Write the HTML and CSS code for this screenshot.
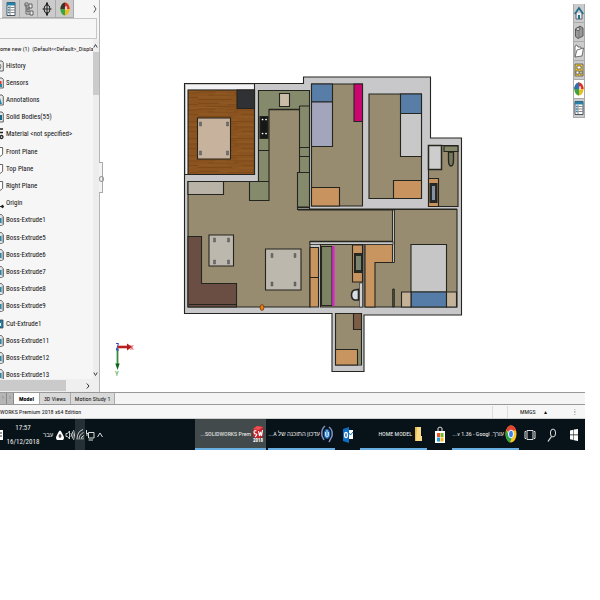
FILE: index.html
```html
<!DOCTYPE html>
<html lang="en">
<head>
<meta charset="utf-8">
<title>SOLIDWORKS Premium 2018</title>
<link rel="stylesheet" href="styles.css">
</head>
<body>
<svg class="defs" aria-hidden="true">
  <defs>
    <symbol id="solid" viewBox="0 0 5 12"><path d="M0 .5h1.5L3.5 3v7.500L1.500 11.500H0" fill="#dfe5e8" stroke="#555" stroke-width=".8"/><path d="M0 4h1.500v5H0z" fill="#2586a8"/><path d="M2.300 3v7" stroke="#777" stroke-width=".6"/></symbol>
    <symbol id="plane" viewBox="0 0 5 12"><path d="M0 1.500h2.600v7L0 10.500" fill="#fff" stroke="#555" stroke-width=".9"/></symbol>
    <symbol id="folder" viewBox="0 0 5 12"><path d="M0 1h2l1.300 1.500v8.500H0" fill="#e8e8e8" stroke="#555" stroke-width=".9"/></symbol>
    <symbol id="ball" viewBox="0 0 10 14"><ellipse cx="5" cy="7" rx="4.600" ry="6.500" fill="#e9bd21"/><path d="M5 7V.5C2.500.5.4 3.500.4 7z" fill="#333"/><path d="M5 7V.5c2.500 0 4.600 3 4.600 6.500z" fill="#de3029"/><path d="M.4 7H5v6.500C2.500 13.500.4 10.500.4 7z" fill="#37a449"/><ellipse cx="6" cy="6" rx="1.200" ry="2" fill="#fff" opacity=".7"/></symbol>
    <symbol id="sheet" viewBox="0 0 10 14"><path d="M1 .5h8v13H1z" fill="#fff" stroke="#345" stroke-width=".9"/><path d="M1 .5h8v3H1z" fill="#2380a6"/><path d="M2 5.500h1.500M2 8h1.500M2 10.500h1.500" stroke="#2380a6" stroke-width="1.400"/><path d="M4.500 5.500h4M4.500 8h4M4.500 10.500h4M4 4v9" stroke="#555" stroke-width=".7"/></symbol>
    <pattern id="wood" width="66" height="17" patternUnits="userSpaceOnUse"><path fill="#8a531f" d="M0 0h66v17H0z"/><path d="M0 1.500h24M30 2.500h36M8 4.500h30M0 7h18M28 8h38M10 10h30M44 12.500h22M0 14.500h34" stroke="#7b4917" stroke-width=".8"/><path d="M20 1h20M0 5.500h20M40 6h26M16 9h20M0 12h30M38 15h20" stroke="#966027" stroke-width=".7"/></pattern>
    <g id="legs"><path d="M0 0h2v4H0z"/></g>
  </defs>
</svg>

<div class="app">
  <div class="workspace">
    <aside class="tree">
      <div class="tree-tabs">
        <button class="tool" aria-label="Properties"><svg viewBox="0 0 10 14"><use href="#sheet"/></svg></button>
        <button class="tool" aria-label="Configurations"><svg viewBox="0 0 10 14" fill="#eee" stroke="#555" stroke-width=".9"><path d="M2 2v10h4M2 6h4M1 1h3v3H1zM5 2h3v4H5zM3 7h2v3H3zM6 9h3v4H6z"/></svg></button>
        <button class="tool" aria-label="Dimensions"><svg viewBox="0 0 10 14" fill="none" stroke="#222"><ellipse cx="5" cy="7" rx="3" ry="4"/><path d="M5 1v12M.5 7h9"/><path d="M4 2.500 5 .5l1 2zM4 11.500l1 2 1-2z" fill="#222"/></svg></button>
        <button class="tool" aria-label="Appearances"><svg viewBox="0 0 10 14"><use href="#ball"/></svg></button>
        <button class="more" aria-label="More tabs"><svg viewBox="0 0 4 8" fill="none" stroke="#555"><path d="M.8.5 3 4 .8 7.500"/></svg></button>
      </div>
      <div class="filter"></div>
      <div class="tree-body">
        <div class="tree-list">
          <div class="root">ome new (1)&nbsp; (Default&lt;&lt;Default&gt;_Displa</div>
          <ul>
            <li><svg viewBox="0 0 5 12"><use href="#folder"/><path d="M0 4q2 2 0 5" fill="none" stroke="#777"/></svg>History</li>
            <li><svg viewBox="0 0 5 12"><use href="#folder"/><path d="M0 4h1.500v3H0z" fill="#d33"/><path d="M0 7h2v3H0z" fill="#2586a8"/></svg>Sensors</li>
            <li><svg viewBox="0 0 5 12"><use href="#folder"/><path d="M0 4l2 6H0z" fill="#2586a8"/></svg>Annotations</li>
            <li><svg viewBox="0 0 5 12"><use href="#folder"/><path d="M0 4h2v5H0z" fill="#17698a"/></svg>Solid Bodies(55)</li>
            <li><svg viewBox="0 0 5 12"><path d="M0 1h3M0 4.500h3" stroke="#222" stroke-width="1.300"/><circle cx="1.500" cy="9" r="1.500" fill="none" stroke="#222" stroke-width="1.300"/></svg>Material &lt;not specified&gt;</li>
            <li><svg viewBox="0 0 5 12"><use href="#plane"/></svg>Front Plane</li>
            <li><svg viewBox="0 0 5 12"><use href="#plane"/></svg>Top Plane</li>
            <li><svg viewBox="0 0 5 12"><use href="#plane"/></svg>Right Plane</li>
            <li><svg viewBox="0 0 5 12"><path d="M0 9.500h2M2 8l2 1.500L2 11z" stroke="#222" fill="#222"/></svg>Origin</li>
            <li><svg viewBox="0 0 5 12"><use href="#solid"/></svg>Boss-Extrude1</li>
            <li><svg viewBox="0 0 5 12"><use href="#solid"/></svg>Boss-Extrude5</li>
            <li><svg viewBox="0 0 5 12"><use href="#solid"/></svg>Boss-Extrude6</li>
            <li><svg viewBox="0 0 5 12"><use href="#solid"/></svg>Boss-Extrude7</li>
            <li><svg viewBox="0 0 5 12"><use href="#solid"/></svg>Boss-Extrude8</li>
            <li><svg viewBox="0 0 5 12"><use href="#solid"/></svg>Boss-Extrude9</li>
            <li><svg viewBox="0 0 5 12"><path d="M0 2h3v8H0z" fill="#2586a8" stroke="#345" stroke-width=".8"/><path d="M0 5h1v3H0z" fill="#dff"/></svg>Cut-Extrude1</li>
            <li><svg viewBox="0 0 5 12"><use href="#solid"/></svg>Boss-Extrude11</li>
            <li><svg viewBox="0 0 5 12"><use href="#solid"/></svg>Boss-Extrude12</li>
            <li><svg viewBox="0 0 5 12"><use href="#solid"/></svg>Boss-Extrude13</li>
          </ul>
        </div>
        <div class="vscroll">
          <svg viewBox="0 0 5 6" fill="none" stroke="#444"><path d="M.8 4.500 2.500 1.500l1.700 3"/></svg>
          <div class="vthumb"></div>
          <svg viewBox="0 0 5 6" fill="none" stroke="#444"><path d="M.8 1.500l1.700 3 1.700-3"/></svg>
        </div>
      </div>
      <div class="hscroll"><div class="hthumb"></div><svg viewBox="0 0 4 8" fill="none" stroke="#333"><path d="M.8 1.500 3 4 .8 6.500"/></svg></div>
      <div class="handle"></div>
    </aside>

    <main class="canvas">
      <svg class="plan" viewBox="100 0 485 392" preserveAspectRatio="xMinYMin meet" role="img" aria-label="Top view of the home model">
        <g stroke="#25251f" stroke-width="1.100">
          <path d="M184.500 83.500H303.500V77H430.500V138H461.500V315H364V371.500H332V313.500H184.500z" fill="#c8c8ca"/>
          <path d="M186 85H254.500V89H188V174H186z" fill="#f2f2f4" stroke="none"/>
          <path d="M188 90H254.500V174.500H188z" fill="url(#wood)"/>
          <path d="M254.500 84V174.500H185" fill="none"/>
          <path d="M237 90H254.500V108.500H237z" fill="#303134"/>
          <path d="M197.500 118H230.500V159H197.500z" fill="#c7b29d"/>
          <!-- living room, kitchen and corridor -->
          <path d="M188 181.500H258.500V90.500H309.500V209.500H393V241.500H310V307H188z" fill="#978b70"/>
          <path d="M258.500 90.500H309.500V207H297.500V172.500H299.500V109.500H269V200.500H249.500V181.500H258.500z" fill="#868a6d"/>
          <path d="M258.500 150.500H269M258.500 181.500H269M299.500 106H309.500M299.500 106V110M299.500 147.500H309.500M299.500 156.500H309.500M297.500 172.500H309.500" fill="none"/>
          <path d="M269 109.500H299.500" stroke-width="1.500"/>
          <path d="M279.500 93.500H289.500V106.500H279.500z" fill="#c9bda8"/>
          <path d="M260 116.500H268V138.500H260z" fill="#171717"/>
          <path d="M188 181.500H223.500V194.500H188z" fill="#b9b2a6"/>
          <path d="M188 236.500H201.500V283.500H236.500V307H188z" fill="#6b4e43"/>
          <path d="M189 304.500H236.500" fill="none"/>
          <path d="M209 235H233.500V266H209zM265.500 249H301V290H265.500z" fill="#bdb8ae"/>
          <path d="M297.500 207.500H309.500V209.500H297.500z" fill="#eef1f1"/>
          <!-- bedrooms and toilet -->
          <path d="M311.500 84H362.500V206H311.500zM369 94H421.500V198.500H369zM428.500 145.500H458V206.500H428.500z" fill="#978b70"/>
          <path d="M311.500 84H332.500V102H311.500zM400.500 94H421.500V113.500H400.500z" fill="#587da7"/>
          <path d="M311.500 102H332.500V146.500H311.500z" fill="#a3a5bc"/>
          <path d="M354 84H362.500V121.500H354z" fill="#cc0670"/>
          <path d="M400.500 113.500H421.500V156.500H400.500z" fill="#c8c8c8"/>
          <path d="M311.500 187.500H339.500V206H311.500zM393.500 180.500H421.500V198.500H393.500z" fill="#c8935e"/>
          <path d="M428.500 145.500H441.500V169.500H428.500z" fill="#cdcdcd" stroke-width="1.500"/>
          <path d="M444 146H458V151.500H444z" fill="#858969"/>
          <path d="M448.500 152h5v8q0 6-2.500 6t-2.500-6z" fill="#777860" stroke-width="1.300"/>
          <path d="M428.500 178.500H438.500V206.500H428.500z" fill="#c8935e"/>
          <path d="M430 183.500H437V202.500H430z" fill="#252a2e"/><path d="M432 186H435V200H432z" fill="#8590a0" stroke="none"/>
          <path d="M298 209.500H457" stroke-width="1.800"/>
          <!-- lower rooms -->
          <path d="M365 244.500H392.500V209.500H457V307H365z" fill="#978b70"/>
          <path d="M365 244.500H392.500V262.500H375V307H365z" fill="#c89560"/>
          <path d="M392.500 210H394.500V262.500H392.500z" fill="#bfc0c0" stroke-width=".9"/><path d="M392.700 289H394.300V307H392.700z" fill="#55564e" stroke-width=".9"/>
          <path d="M411 244.500H446.500V292H411z" fill="#c6c6c6"/>
          <path d="M411 292H446.500V307H411z" fill="#557ca7"/>
          <path d="M401.500 292H411V307H401.500zM446.500 292H456.500V307H446.500z" fill="#c3b298"/>
          <path d="M310 247.500H318.500V307H310zM310 277.500H318.500" fill="#c89560"/>
          <path d="M310 241.500H393V244.500H310z" fill="#c8c8ca" stroke-width=".8"/>
          <path d="M310 241.500H393" stroke-width="1.600"/>
          <path d="M320.500 244.500H363V307H320.500z" fill="#978b70"/>
          <path d="M321.500 246.500H332V305.500H321.500z" fill="#7d8265"/>
          <path d="M333.500 246V306" stroke="#e022d4" stroke-width="2.200"/>
          <path d="M352.500 245H362.500V282H352.500z" fill="#c8935e"/>
          <path d="M354.500 253.500H362V272.500H354.500z" fill="#252a24"/><path d="M356 256H361V270H356z" fill="#7b826d" stroke="none"/>
          <path d="M359.500 283H362.500V307H359.500z" fill="#d0d0d0" stroke-width=".6"/>
          <path d="M358.500 289.500v10.500h-4q-3-1-3-5t3-5z" fill="#d8dce2" stroke-width="1.600"/>
          <path d="M335.500 313.500H361.500V365H335.500z" fill="#978b70"/>
          <path d="M353.500 313.500H361.500V329.500H353.500z" fill="#7d5c45"/>
          <path d="M357.500 349.500H361V364.500H357.500z" fill="#868a6d" stroke="none"/>
          <path d="M335.500 349.500H357.500V365H335.500z" fill="#c89560"/>
        </g>
        <path d="M262.500 119.500h.1M266 119.500h.1M262.500 133.500h.1M266 133.500h.1" stroke="#fff" stroke-width="1.700" stroke-linecap="round"/>
        <g fill="#6c7072" stroke="#444" stroke-width=".4">
          <use href="#legs" x="199.500" y="122"/><use href="#legs" x="226.500" y="122"/><use href="#legs" x="199.500" y="151"/><use href="#legs" x="226.500" y="151"/>
          <use href="#legs" x="213.500" y="238"/><use href="#legs" x="227.500" y="238"/><use href="#legs" x="213.500" y="260"/><use href="#legs" x="227.500" y="260"/>
          <use href="#legs" x="271" y="253.500"/><use href="#legs" x="294" y="253.500"/><use href="#legs" x="271" y="282"/><use href="#legs" x="294" y="282"/>
        </g>
        <ellipse cx="262" cy="307.500" rx="1.900" ry="3" fill="#f07b0b" stroke="#5c3208" stroke-width=".7"/>
        <path d="M117.500 347H128" stroke="#be2020" stroke-width="2.600"/><path d="M127 343.500l5 3.500-5 3.500z" fill="#b51b1b"/>
        <path d="M117.500 348V365" stroke="#3a8a3e" stroke-width="1.800"/><path d="M115.300 363.500h4.400l-2.200 6.500z" fill="#116518"/>
        <path d="M116 343.500h2.500L116.300 350H119" fill="none" stroke="#3b46cf"/>
        <text class="axis axis-x" x="130" y="350">X</text><text class="axis axis-y" x="115" y="376">Y</text>
      </svg>
      <nav class="pane-tools" aria-label="Task pane">
        <button class="tool" aria-label="Resources"><svg viewBox="0 0 10 14"><path d="M2 7v6h6V7" fill="#eee" stroke="#567"/><path d="M.8 8 5 2l4.200 6" fill="none" stroke="#246e8c" stroke-width="1.800"/><path d="M4 9h2v4H4z" fill="#246e8c"/></svg></button>
        <button class="tool" aria-label="Design library"><svg viewBox="0 0 10 14" stroke="#444" stroke-width=".8"><path d="M1.500 4 6 1l3 2v8l-5 2.500-2.500-2z" fill="#999"/><ellipse cx="4" cy="4" rx="2" ry="1.500" fill="#ddd"/><path d="M5 6v7" stroke="#777"/></svg></button>
        <button class="tool" aria-label="File explorer"><svg viewBox="0 0 10 14" stroke="#555" stroke-width=".8" fill="#fff"><path d="M1 13V2l2-1 1 2h3v3"/><path d="M1 13 3 6 9.500 4 8 12z"/></svg></button>
        <button class="tool" aria-label="View palette"><svg viewBox="0 0 10 14"><path d="M1 1h8v12H1z" fill="#edc737" stroke="#555" stroke-width=".8"/><path d="M3 3h4v3H3zM2 8h3v3H2zM6 8h2v3H6z" fill="#fff" stroke="#444" stroke-width=".7"/></svg></button>
        <button class="tool selected" aria-label="Appearances"><svg viewBox="0 0 10 14"><use href="#ball"/><path d="M5 7V.5C2.500.5.4 3.500.4 7z" fill="#2a71bc"/></svg></button>
        <button class="tool" aria-label="Custom properties"><svg viewBox="0 0 10 14"><use href="#sheet"/></svg></button>
      </nav>
    </main>
  </div>

  <div class="tabs">
    <button class="step" aria-label="Next">›</button><button class="step" aria-label="Last">›</button>
    <button class="tab active">Model</button><button class="tab">3D Views</button><button class="tab">Motion Study 1</button>
  </div>

  <footer class="status">
    <span>WORKS Premium 2018 x64 Edition</span>
    <i class="rules"></i>
    <span class="units">MMGS</span><span class="dot">▴</span><span class="end">⁞</span>
  </footer>

  <div class="taskbar">
    <svg class="notice" viewBox="0 0 3 12"><path fill="#fff" d="M0 1h3v10H0z"/><path d="M0 4h2M0 7h2" stroke="#333"/></svg>
    <div class="clock"><span>17:57</span><span>16/12/2018</span></div>
    <span class="lang" lang="he">עבר</span>
    <div class="tray">
      <svg viewBox="0 0 10 12"><path d="M2 11q-2-2 0-5l1.500-3Q5 0 6.500 3L8 6q2 3 0 5z" fill="#fff"/><path d="M5 5v4M3.500 7h3" stroke="#111"/></svg>
      <svg viewBox="0 0 10 12" fill="none" stroke="#ddd" stroke-width=".9"><path d="M1 4.500h1.500L4.500 2v8L2.500 7.500H1zM6 4q1 2 0 4M7.300 2.500q1.700 3.500 0 7M8.600 1q2 5 0 10"/></svg>
      <svg class="lit" viewBox="0 0 10 12" fill="none" stroke="#ccc"><path d="M2 11Q2 3 8 1M4 11q0-5 4.500-7M6 11q0-3 3-4M8 11V9"/></svg>
      <svg viewBox="0 0 10 12" fill="none" stroke="#ddd"><path d="M3.500 3.500H9V9H3.500zM1.500 1v3.500H4M3.500 11H8M2 4v3"/></svg>
      <svg viewBox="0 0 10 12" fill="none" stroke="#ddd"><path d="M2.500 8 5 4l2.500 4"/></svg>
    </div>
    <div class="apps">
      <button class="task current" dir="rtl"><svg viewBox="0 0 12 18"><path d="M1 4 5 1l6 1v9l-4 3-6-2z" fill="#c91d27"/><path d="M1 4 5 1l6 1-4 3z" fill="#ee5051"/><path d="M4.500 6Q2 5 2 7t2 2-1 3M6.500 6l1 5 1-4 1 4 1-6" fill="none" stroke="#fff" stroke-width="1.100"/><text x="11" y="17" class="year">2018</text></svg><span>SOLIDWORKS Prem...</span></button>
      <button class="task" dir="rtl"><svg viewBox="0 0 12 18"><ellipse cx="6" cy="9" rx="3.300" ry="5" fill="#2169b5"/><path d="M4 1Q0 4 1 11l2 4M8 2q4 3 3 9l-3 6" fill="none" stroke="#8394cc" stroke-width="1.500"/><path d="M6 5v7M4.500 7v3q0 2 1.500 2t1.500-2V7" fill="none" stroke="#b8e4ff"/></svg><span lang="he">עדכון התוכנה של A...</span></button>
      <button class="pin" aria-label="Outlook"><svg viewBox="0 0 12 18"><path d="M5 4h6v9H5z" fill="#fff"/><path d="M6 6l2.500 3L11 6" fill="none" stroke="#1473c5"/><path d="M1 3l6-2v16l-6-2z" fill="#0b6fc5"/><ellipse cx="4" cy="9" rx="1.400" ry="2.600" fill="none" stroke="#fff" stroke-width="1.200"/></svg></button>
      <button class="task" dir="rtl"><svg viewBox="0 0 12 18"><path d="M2 2h5v14H2z" fill="#e8b84f"/><path d="M4 2h4v9h1v5H3z" fill="#f9dc87"/></svg><span>HOME MODEL</span></button>
      <button class="pin" aria-label="Store"><svg viewBox="0 0 12 18"><path d="M4 5V2q2-2 4 0v3" fill="none" stroke="#ddd"/><path d="M1 5h10v12H1z" fill="#fff"/><path d="M3 7h3v4H3z" fill="#e9512c"/><path d="M6.500 7h3v4h-3z" fill="#79b51c"/><path d="M3 11.500h3v4H3z" fill="#1ba0df"/><path d="M6.500 11.500h3v4h-3z" fill="#f8b51a"/></svg></button>
      <button class="task" dir="rtl"><svg viewBox="0 0 12 18"><ellipse cx="6" cy="9" rx="5.500" ry="8.500" fill="#fbc91f"/><path d="M6 9 1.200 5Q3 .5 6 .5q4 0 5 5H6z" fill="#e44335"/><path d="M1.200 5Q-1 14 5 17.400L7 12 4 11z" fill="#2ba24c"/><ellipse cx="6" cy="9" rx="2.500" ry="3.900" fill="#3f82ee" stroke="#fff"/></svg><span lang="he">עורך. <bdi>v 1.36 - Googl</bdi>...</span></button>
      <button class="pin system" aria-label="Task view"><svg viewBox="0 0 12 18" fill="none" stroke="#ddd"><path d="M3 4.500h6v9H3zM2 5.500H1v7h1M10 5.500h1v7h-1"/></svg></button>
      <button class="pin system" aria-label="Search"><svg viewBox="0 0 12 18" fill="none" stroke="#ddd"><ellipse cx="7" cy="7" rx="2.600" ry="4"/><path d="M5.500 10.500 2 15.500" stroke-width="1.300"/></svg></button>
      <button class="pin system" aria-label="Start"><svg viewBox="0 0 12 18" fill="#fff"><path d="M2 4.500l3.500-.8v4.800H2zM6 3.600 10 3v5.500H6zM2 9.200h3.500V14L2 13.300zM6 9.200h4V15l-4-.8z"/></svg></button>
    </div>
  </div>
</div>
</body>
</html>
```

FILE: styles.css
```css
* { box-sizing: border-box; }
body {
  margin: 0;
  background: #fff;
  color: #111;
  font-family: "Roboto Condensed", Lato, "Liberation Sans", sans-serif;
  font-size: 7px;
  line-height: 12px;
}
button { margin: 0; padding: 0; border: 0; background: none; color: inherit; font: inherit; }
svg { display: block; flex: none; }
.defs { position: absolute; width: 0; height: 0; }
.app { margin-right: 15px; }

.workspace { display: flex; }
.tree {
  position: relative;
  flex: none;
  display: flex;
  flex-direction: column;
  width: 100px;
  border-right: 1px solid #b5b5b5;
  background: #f6f6f6;
}
.tree-tabs { display: flex; height: 18px; padding-left: 2px; }
.tool {
  display: flex;
  align-items: center;
  justify-content: center;
  width: 18px;
  background: #cbcbcb;
  border-right: 1px solid #aaa;
  border-bottom: 1px solid #aaa;
}
.tool svg { width: 10px; height: 14px; }
.more { margin: 0 2px 0 auto; }
.more svg { width: 4px; height: 8px; }
.filter { height: 21px; margin-right: 2px; border: 1px solid #c6c6c6; border-left: 0; }
.tree-body { display: flex; height: 340px; }
.tree-list { flex: 1; min-width: 0; white-space: nowrap; }
.root { height: 18px; font-size: 6px; line-height: 20px; }
.tree-list ul {
  display: flex;
  flex-direction: column;
  height: 327px;
  margin: 0;
  padding: 0;
  list-style: none;
}
.tree-list li { display: flex; flex: 1; align-items: center; gap: 1px; }
.tree-list li svg { width: 5px; height: 12px; }
.vscroll { display: flex; flex-direction: column; width: 6px; padding: 4px 0 2px; background: #ededed; }
.vscroll svg { width: 5px; height: 6px; }
.vthumb { height: 43px; margin: 3px 0 auto; background: #cbcbcb; }
.hscroll { display: flex; align-items: center; height: 13px; padding-right: 9px; justify-content: space-between; background: #efefef; }
.hthumb { width: 66px; height: 11px; background: #cacaca; }
.hscroll svg { width: 4px; height: 8px; }
.handle {
  position: absolute;
  top: 162px;
  right: -4px;
  width: 4px;
  height: 31px;
  border: 1px solid #aaa;
  border-left: 0;
  background: #f3f3f3;
}
.handle::after { content: ""; display: block; width: 3px; height: 4px; margin-top: 13px; border: 1px solid #999; border-radius: 50%; }

.canvas { position: relative; flex: 1; min-width: 0; }
.plan { width: 100%; height: auto; }
.axis { font-size: 7px; }
.axis-x { fill: #e33; }
.axis-y { fill: #2a9a35; }
.pane-tools { position: absolute; top: 4px; right: 0; display: grid; grid-auto-rows: 19px; width: 12px; border-left: 1px solid #aaa; }
.pane-tools .tool { width: 100%; }
.pane-tools .selected { background: #fff; }

.tabs { display: flex; height: 13px; background: #f4f4f4; border-top: 1px solid #999; border-bottom: 1px solid #999; }
.step { width: 7px; background: #b5b5b5; border-right: 1px solid #888; color: #777; line-height: 9px; }
.tab { padding: 0 4px; border-right: 1px solid #aaa; background: #d9d9d9; font-size: 6px; line-height: 11px; }
.active { padding: 0 5px; background: #fff; font-weight: bold; color: #000; }

.status { display: flex; height: 14px; align-items: center; background: #f6f6f6; border-bottom: 1px solid #d0d0d0; font-size: 6px; }
.rules { width: 16px; height: 12px; margin-left: auto; margin-right: 12px; border: solid #ddd; border-width: 0 1px; }
.units { width: 24px; }
.dot { width: 30px; }
.end { width: 11px; }

.taskbar { display: flex; align-items: center; height: 31px; background: #081319; color: #f0f0f0; }
.notice { width: 3px; height: 12px; }
.clock { display: flex; flex-direction: column; width: 40px; line-height: 14px; text-align: center; }
.lang { width: 12px; font-size: 6px; }
.tray { display: flex; align-self: stretch; align-items: center; }
.tray svg { width: 10px; height: 12px; }
.tray .lit { height: 31px; background: #253036; }
.apps { display: flex; align-self: stretch; margin-left: auto; }
.task {
  display: flex;
  align-items: center;
  width: 67px;
  padding: 0 2px;
  gap: 1px;
  border-bottom: 2px solid #68aee2;
  white-space: nowrap;
  font-size: 6px;
}
.task svg, .pin svg { width: 12px; height: 18px; }
.current { width: 71px; margin-right: 2px; background: #434a4c; }
.pin { display: flex; align-items: center; justify-content: center; width: 25px; }
.system { width: 22px; }
.year { font-size: 5px; font-weight: bold; fill: #fff; }
```
